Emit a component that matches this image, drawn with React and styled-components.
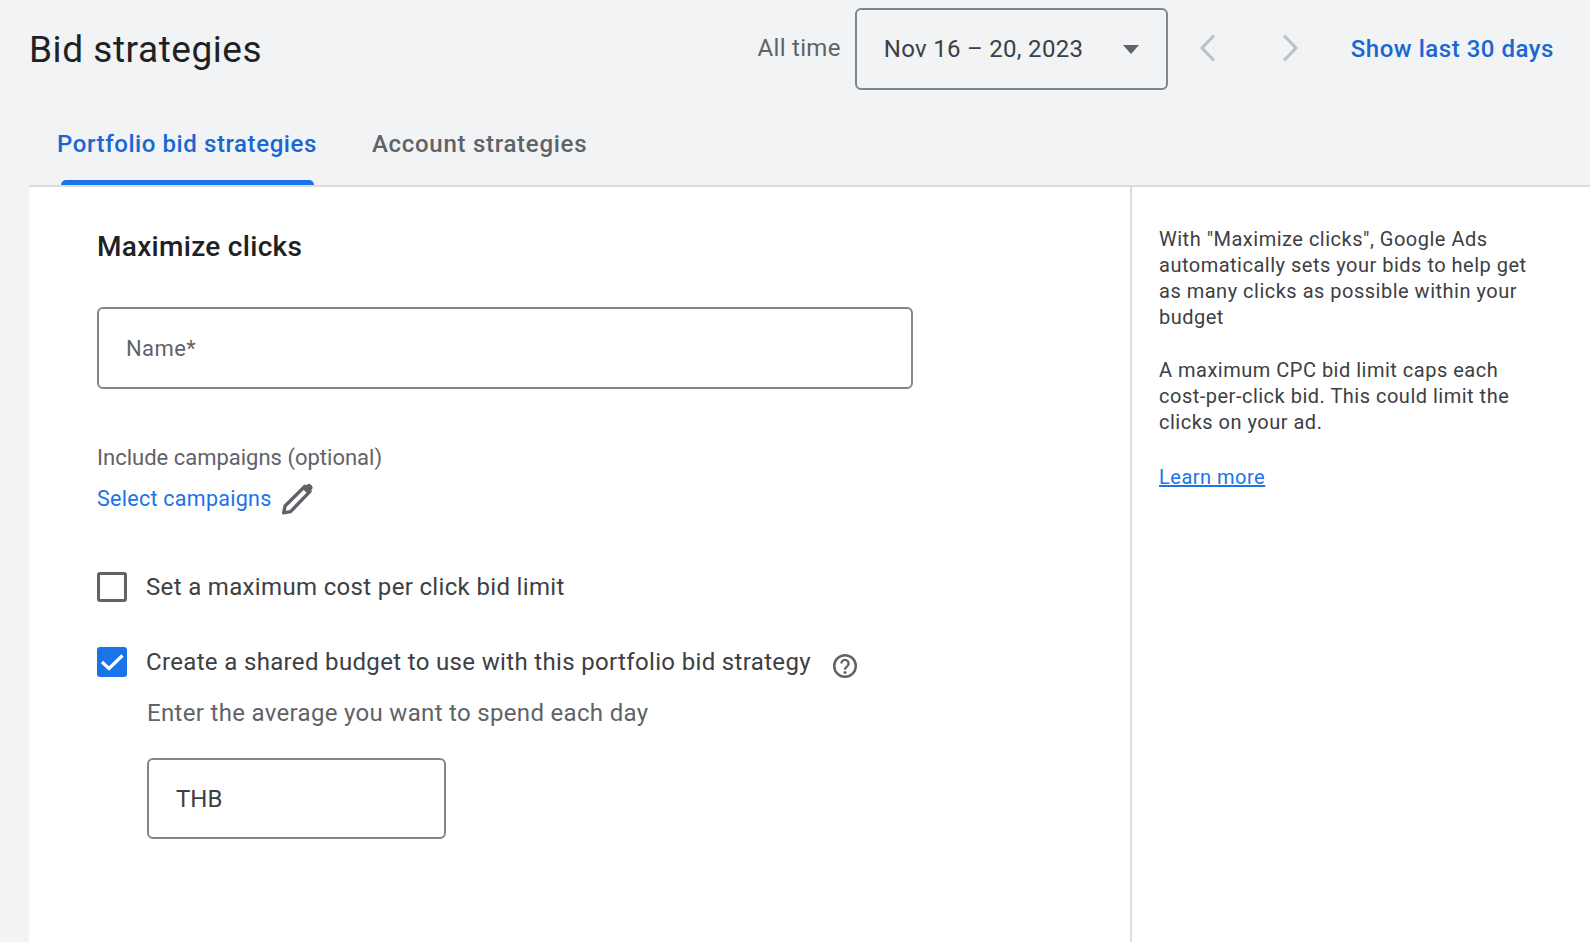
import React from "react";
import styled, { createGlobalStyle } from "styled-components";

const Global = createGlobalStyle`
  html, body { margin: 0; padding: 0; background: #f1f3f4; }
  body { font-family: Roboto, "Liberation Sans", sans-serif; color: #3c4043; }
  * { box-sizing: border-box; }
`;

const Page = styled.div`
  width: 1590px;
  height: 942px;
  overflow: hidden;
  padding-left: 29px;
  display: flex;
  flex-direction: column;
`;

const Header = styled.header`
  display: flex;
  align-items: flex-start;
  justify-content: space-between;
  padding: 8px 36px 0 0;
  height: 89px;
`;

const Title = styled.h1`
  margin: 0;
  padding-top: 20px;
  font-size: 37px;
  line-height: 44px;
  font-weight: 400;
  letter-spacing: 0.55px;
  color: #202124;
`;

const DateControls = styled.div`
  display: flex;
  align-items: center;
  height: 82px;
`;

const RangeLabel = styled.span`
  font-size: 24px;
  line-height: 32px;
  letter-spacing: 0.3px;
  color: #5f6368;
  margin-right: 14px;
  margin-top: -2px;
`;

const DateSelect = styled.div`
  width: 313px;
  height: 82px;
  border: 2px solid #80868b;
  border-radius: 6px;
  display: flex;
  align-items: center;
  justify-content: space-between;
  padding: 0 27px 0 27px;
  font-size: 24px;
  letter-spacing: 0.3px;
  color: #3c4043;
`;

const Caret = styled.span`
  width: 0;
  height: 0;
  border-left: 8px solid transparent;
  border-right: 8px solid transparent;
  border-top: 9px solid #5f6368;
`;

const NavIcon = styled.svg`
  width: 18px;
  height: 28px;
  margin-left: ${(p) => p.$gap}px;
  margin-top: -3px;
  fill: none;
  stroke: #bdc1c6;
  stroke-width: 3;
`;

const ShowLast = styled.a`
  margin-left: 52px;
  font-size: 24px;
  font-weight: 500;
  color: #1967d2;
  letter-spacing: 0.53px;
`;

const Tabs = styled.nav`
  display: flex;
  height: 98px;
  padding-left: 28px;
  gap: 55px;
  border-bottom: 2px solid #dadce0;
  align-items: flex-end;
`;

const Tab = styled.div`
  position: relative;
  height: 96px;
  padding-top: 39px;
  font-size: 24px;
  line-height: 32px;
  font-weight: 500;
  letter-spacing: ${(p) => (p.$active ? 0.58 : 0.72)}px;
  color: ${(p) => (p.$active ? "#1967d2" : "#5f6368")};
  ${(p) =>
    p.$active &&
    `&::after {
      content: "";
      position: absolute;
      left: 4px;
      right: 3px;
      bottom: 0;
      height: 5px;
      border-radius: 5px 5px 0 0;
      background: #1a73e8;
    }`}
`;

const Body = styled.div`
  flex: 1;
  display: flex;
  background: #fff;
  min-height: 0;
`;

const Form = styled.main`
  width: 1103px;
  flex: none;
  padding: 43px 0 0 68px;
  border-right: 2px solid #dadce0;
`;

const SectionTitle = styled.h2`
  margin: 0 0 43px;
  font-size: 28px;
  line-height: 34px;
  font-weight: 500;
  letter-spacing: 0.3px;
  color: #202124;
`;

const TextBox = styled.div`
  width: ${(p) => p.$width}px;
  height: ${(p) => p.$height}px;
  border: 2px solid #80868b;
  border-radius: 6px;
  display: flex;
  align-items: center;
  padding-left: 27px;
  font-size: ${(p) => p.$size || 22}px;
  letter-spacing: ${(p) => p.$spacing || 0}px;
  color: ${(p) => p.$color || "#5f6368"};
`;

const FieldLabel = styled.div`
  margin-top: 54px;
  font-size: 22px;
  line-height: 30px;
  letter-spacing: 0px;
  color: #5f6368;
`;

const SelectRow = styled.div`
  display: flex;
  align-items: center;
  gap: 9px;
  margin-top: 9px;
`;

const BlueLink = styled.a`
  font-size: 21.5px;
  line-height: 34px;
  letter-spacing: 0.27px;
  color: #1a73e8;
`;

const PencilIcon = styled.svg`
  width: 34px;
  height: 34px;
  margin: -3px 0 -1px;
`;

const CheckRow = styled.div`
  display: flex;
  align-items: center;
  gap: 19px;
  margin-top: ${(p) => p.$top}px;
`;

const Box = styled.span`
  width: 30px;
  height: 30px;
  flex: none;
  border-radius: 3px;
  display: flex;
  align-items: center;
  justify-content: center;
  border: ${(p) => (p.$checked ? "none" : "3px solid #5f6368")};
  background: ${(p) => (p.$checked ? "#1a73e8" : "#fff")};
`;

const CheckLabel = styled.span`
  font-size: 24px;
  line-height: 32px;
  letter-spacing: 0.34px;
  color: #3c4043;
`;

const HelpIcon = styled.svg`
  width: 26px;
  height: 26px;
  margin: 8px 0 0 2px;
`;

const Indented = styled.div`
  padding-left: 50px;
`;

const Hint = styled.div`
  margin: 18px 0 29px;
  font-size: 24px;
  line-height: 32px;
  letter-spacing: 0.32px;
  color: #5f6368;
`;

const Aside = styled.aside`
  flex: 1;
  padding: 39px 40px 0 27px;
  font-size: 20px;
  line-height: 26px;
  letter-spacing: 0.5px;
  color: #3c4043;
`;

const Para = styled.p`
  margin: 0 0 ${(p) => p.$gap}px;
`;

const LearnMore = styled.a`
  color: #1a73e8;
  text-decoration: underline;
`;

export default function App() {
  return (
    <Page>
      <Global />
      <Header>
        <Title>Bid strategies</Title>
        <DateControls>
          <RangeLabel>All time</RangeLabel>
          <DateSelect>
            <span>Nov 16 – 20, 2023</span>
            <Caret />
          </DateSelect>
          <NavIcon $gap={31} viewBox="0 0 18 28">
            <path d="M15 1.5 3 14l12 12.5" />
          </NavIcon>
          <NavIcon $gap={64} viewBox="0 0 18 28">
            <path d="M3 1.5 15 14 3 26.5" />
          </NavIcon>
          <ShowLast>Show last 30 days</ShowLast>
        </DateControls>
      </Header>
      <Tabs>
        <Tab $active>Portfolio bid strategies</Tab>
        <Tab>Account strategies</Tab>
      </Tabs>
      <Body>
        <Form>
          <SectionTitle>Maximize clicks</SectionTitle>
          <TextBox $width={816} $height={82} $spacing={0.4}>Name*</TextBox>
          <FieldLabel>Include campaigns (optional)</FieldLabel>
          <SelectRow>
            <BlueLink>Select campaigns</BlueLink>
            <PencilIcon viewBox="0 0 32 32">
              <path
                d="M2.5 30 3.8 23.5 22.5 5 27.3 9.8 9 28.8z"
                fill="none"
                stroke="#5f6368"
                strokeWidth="3.2"
                strokeLinejoin="round"
              />
              <path
                d="M20.5 7.5 25 12l4-4a2.6 2.6 0 0 0 0-3.6l-.9-.9a2.6 2.6 0 0 0-3.6 0z"
                fill="#5f6368"
              />
            </PencilIcon>
          </SelectRow>
          <CheckRow $top={55}>
            <Box />
            <CheckLabel>Set a maximum cost per click bid limit</CheckLabel>
          </CheckRow>
          <CheckRow $top={42}>
            <Box $checked>
              <svg width="30" height="30" viewBox="0 0 30 30" fill="none">
                <path d="M5 15 12 21.5 25.5 8.5" stroke="#fff" strokeWidth="3.2" />
              </svg>
            </Box>
            <CheckLabel>Create a shared budget to use with this portfolio bid strategy</CheckLabel>
            <HelpIcon viewBox="0 0 26 26">
              <circle cx="13" cy="13" r="10.8" fill="none" stroke="#5f6368" strokeWidth="2.5" />
              <path
                d="M9.4 10.4a3.6 3.6 0 1 1 5.9 2.8c-1.3 1-2.3 1.7-2.3 3.6"
                fill="none"
                stroke="#5f6368"
                strokeWidth="2.3"
              />
              <circle cx="13" cy="19.4" r="1.5" fill="#5f6368" />
            </HelpIcon>
          </CheckRow>
          <Indented>
            <Hint>Enter the average you want to spend each day</Hint>
            <TextBox $width={299} $height={81} $size={24} $color="#3c4043">THB</TextBox>
          </Indented>
        </Form>
        <Aside>
          <Para $gap={27}>
            With "Maximize clicks", Google Ads automatically sets your bids to help get as many
            clicks as possible within your budget
          </Para>
          <Para $gap={29}>
            A maximum CPC bid limit caps each cost-per-click bid. This could limit the clicks on
            your ad.
          </Para>
          <LearnMore>Learn more</LearnMore>
        </Aside>
      </Body>
    </Page>
  );
}
